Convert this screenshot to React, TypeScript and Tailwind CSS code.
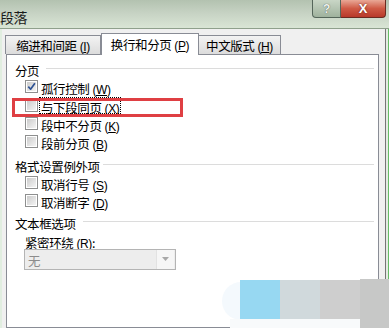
import React from "react";

const CJK = { fontFamily: '"Noto Sans CJK SC", "Noto Sans", sans-serif' };

function M({ k }: { k: string }) {
  return (
    <span className="ml-[3px] text-[12px]" style={{ fontFamily: '"Liberation Sans", sans-serif' }}>
      (<span className="underline underline-offset-[1px]">{k}</span>)
    </span>
  );
}

function Box({ checked }: { checked?: boolean }) {
  return (
    <div className="w-[13px] h-[13px] border border-[#8e8f8f] bg-white p-[1px] shrink-0">
      <div className="relative w-full h-full bg-[linear-gradient(135deg,#cbcbcb,#f4f4f4)]">
        {checked && (
          <svg viewBox="0 0 9 9" className="absolute inset-0 w-full h-full">
            <path d="M1.3 4.6 L3.6 7.2 L7.9 1.2" fill="none" stroke="#2f5394" strokeWidth="1.7" strokeLinejoin="round" />
          </svg>
        )}
      </div>
    </div>
  );
}

function Heading({ text, gap }: { text: string; gap: string }) {
  return (
    <div className="flex items-center h-[16px] pl-[8px] pr-[4px]">
      <span className="pt-[6px] leading-none whitespace-nowrap text-[12.5px]">{text}</span>
      <div className={`flex-1 h-px bg-[#dcdcdc] ${gap}`} />
    </div>
  );
}

function Row({ text, k, checked, focus, extra }: { text: string; k: string; checked?: boolean; focus?: boolean; extra?: string }) {
  return (
    <div className={`flex items-center h-[18px] pl-[18px] ${extra ?? ""}`}>
      <Box checked={checked} />
      <span
        className={`ml-[2px] px-[1px] whitespace-nowrap flex items-center h-[15px] ${
          focus ? "outline outline-1 outline-dotted outline-black" : ""
        }`}
      >
        <span className="pt-[6px] leading-none text-[12.5px]">
          {text}
          <M k={k} />
        </span>
      </span>
    </div>
  );
}

export default function App() {
  return (
    <div
      className="relative w-[389px] h-[328px] overflow-hidden bg-[#f0f0f0] text-[12px] text-black tracking-[-0.4px]"
      style={CJK}
    >
      {/* title bar */}
      <div className="flex items-start justify-between h-[28px] bg-[linear-gradient(180deg,#b3c2b0_0%,#c6d2c3_45%,#d9e5d5_100%)]">
        <div className="ml-0 mt-[10px] text-[14px] leading-none text-[#1a1a1a]">段落</div>
        <div className="flex mr-[3px]">
          <div className="w-[29px] h-[18px] border border-[#55665a] border-t-0 rounded-bl-[4px] bg-[linear-gradient(180deg,#c9d6c6,#9fb29d)] flex items-center justify-center">
            <span className="text-[12px] font-bold leading-none text-[#eef3ee]" style={{ fontFamily: '"Liberation Sans", sans-serif', textShadow: "0 0 1px #333" }}>
              ?
            </span>
          </div>
          <div className="w-[45px] h-[18px] border border-[#6b2a20] border-t-0 border-l-0 rounded-br-[4px] bg-[linear-gradient(180deg,#e9a896,#cf5a45_50%,#b8392a)] flex items-center justify-center">
            <span className="text-[13px] font-bold leading-none text-white" style={{ fontFamily: '"Liberation Sans", sans-serif', textShadow: "0 0 2px #5a1a10" }}>
              X
            </span>
          </div>
        </div>
      </div>
      <div className="h-px bg-[#8fa08c]" />

      {/* body */}
      <div className="flex h-[299px]">
        <div className="w-[2px] bg-[#e1eee0]" />
        <div className="flex-1 flex flex-col">
          {/* tabs */}
          <div className="flex items-end h-[27px] pl-[3px]">
            <div className="w-[96px] h-[19px] border border-b-0 border-[#898c95] bg-[linear-gradient(180deg,#f3f3f3,#dcdcdc)] flex items-center justify-center">
              <span className="pt-[4px] leading-none whitespace-nowrap text-[12.5px]">缩进和间距<M k="I" /></span>
            </div>
            <div className="relative z-10 w-[98px] h-[22px] mb-[-1px] border border-b-0 border-[#898c95] bg-white flex items-center justify-center pb-[2px]">
              <span className="pt-[4px] leading-none whitespace-nowrap text-[12.5px]">换行和分页<M k="P" /></span>
            </div>
            <div className="w-[82px] h-[19px] border border-b-0 border-l-0 border-[#898c95] bg-[linear-gradient(180deg,#f3f3f3,#dcdcdc)] flex items-center justify-center">
              <span className="pt-[4px] leading-none whitespace-nowrap text-[12.5px]">中文版式<M k="H" /></span>
            </div>
          </div>
          {/* panel */}
          <div className="ml-[4px] w-[373px] h-[300px] border border-[#898c95] bg-white flex flex-col pt-[6px]">
            <Heading text="分页" gap="ml-[7px]" />
            <Row text="孤行控制" k="W" checked extra="mt-[1px]" />
            <Row text="与下段同页" k="X" focus extra="mt-[1px]" />
            <Row text="段中不分页" k="K" />
            <Row text="段前分页" k="B" />
            <div className="mt-[6px]">
              <Heading text="格式设置例外项" gap="ml-[3px]" />
            </div>
            <Row text="取消行号" k="S" extra="mt-[1px]" />
            <Row text="取消断字" k="D" />
            <div className="mt-[4px]">
              <Heading text="文本框选项" gap="ml-[7px]" />
            </div>
            <div className="mt-[3px] h-[16px] pl-[18px] flex items-center">
              <span className="pt-[6px] leading-none whitespace-nowrap text-[12.5px]">
                紧密环绕<M k="R" />:
              </span>
            </div>
            <div className="ml-[17px] w-[152px] h-[21px] border border-[#b4b4b4] bg-[#ededed] flex items-center">
              <span className="flex-1 pl-[3px] pt-[4px] leading-none text-[12.5px] text-[#8c8c8c]">无</span>
              <div className="w-[18px] h-[19px] mr-[1px] bg-[#f6f6f6] border-l border-[#e2e2e2] flex items-center justify-center">
                <svg width="7" height="4" viewBox="0 0 7 4">
                  <path d="M0 0 H7 L3.5 4 Z" fill="#a8a8a8" />
                </svg>
              </div>
            </div>
          </div>
        </div>
        <div className="w-[4px] flex">
          <div className="w-px bg-[#767676]" />
          <div className="flex-1 bg-[#e4ece3]" />
          <div className="w-px bg-[#66bb66]" />
        </div>
      </div>

      {/* red annotation */}
      <div className="absolute left-[12px] top-[98px] w-[171px] h-[19px] border-[3px] border-[#df3f43]" />

      {/* bottom-right colour blocks */}
      <div className="absolute left-[222px] top-[282px] w-[40px] h-[38px] rounded-full bg-[#f4f9fd]" />
      <div className="absolute left-[230px] top-[319px] w-[130px] h-[9px] bg-[#f8fafb]" />
      <div className="absolute left-[240px] top-[280px] flex h-[39px]">
        <div className="w-[40px] bg-[#97d8f2]" />
        <div className="w-[40px] bg-[#d0d9dc]" />
        <div className="w-[40px] bg-[#cecece]" />
      </div>
      <div className="absolute left-[360px] top-[279px] w-[29px] h-[49px] bg-[#c7c8c7]" />
    </div>
  );
}
